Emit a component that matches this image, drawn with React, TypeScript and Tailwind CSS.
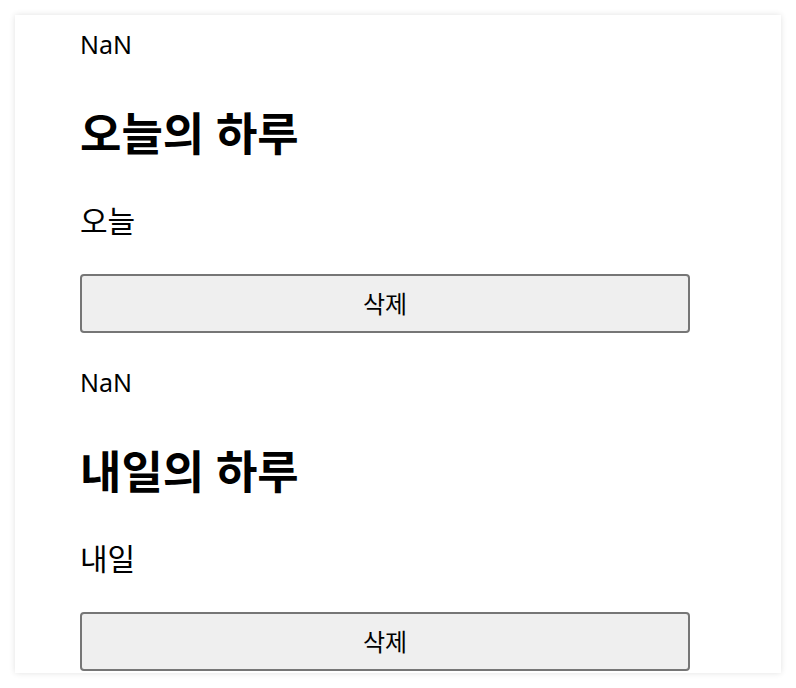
const days = [
    { date: 'NaN', title: '오늘의 하루', content: '오늘' },
    { date: 'NaN', title: '내일의 하루', content: '내일' },
]

const DayItem = ({ date, title, content }: { date: string, title: string, content: string }) => {
    return <div className="flex flex-col">
        <p className="text-[25px] leading-[36px]">{date}</p>
        <h1 className="mt-[46px] text-[45px] leading-[52px] font-bold">{title}</h1>
        <p className="mt-[41px] text-[30px] leading-[40px]">{content}</p>
        <button className="mt-[33px] w-[610px] h-[59px] bg-[#efefef] border-2 border-[#767676] rounded-[4px] text-[24px]" type="button">
            삭제
        </button>
    </div>
}

export default function App() {
    return <div className="bg-white p-[15px]" style={{ fontFamily: '"Noto Sans", "Noto Sans CJK KR", sans-serif' }}>
        <div className="bg-white shadow-[0_0_6px_rgba(0,0,0,0.12)] pl-[65px] pt-[11px] pb-[2px] flex flex-col gap-[31px] text-black">
            {days.map((day, i) => <DayItem key={i} {...day} />)}
        </div>
    </div>
}
